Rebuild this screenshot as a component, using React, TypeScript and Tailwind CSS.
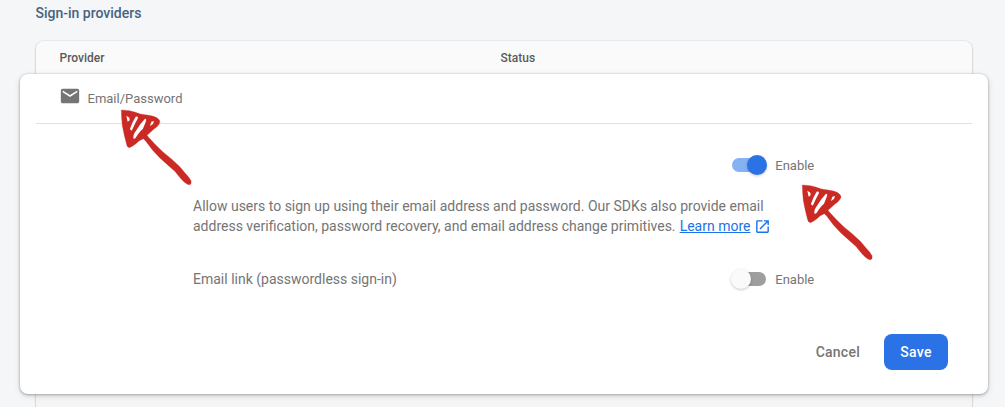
function Arrow({ className }: { className: string }) {
  return (
    <svg className={`pointer-events-none absolute size-[100px] ${className}`} viewBox="0 0 300 300" aria-hidden="true">
      <path
        fill="#ca2a23"
        stroke="#ca2a23"
        strokeWidth="1"
        d="M34 45L58 47Q73 50 91 57L124 62Q142 66 148 75Q152 82 147 88Q141 97 132 102L111 121L115 126Q137 151 158 170Q186 192 208 214Q216 223 225 234Q237 246 243 257Q245 268 239 269L232 268Q222 262 213 251Q203 240 196 230Q172 209 149 188Q126 166 107 138L100 131L88 137Q76 148 67 154L58 158Q51 156 50 149Q42 119 37 92Q34 65 34 45Z"
      />
      <path
        fill="white"
        d="M49 62L58 68L59 76L53 80Z
        M77 65Q84 64 84 69Q74 87 66 106Q61 107 60 101Q67 80 77 65Z
        M105 71Q111 71 107 81L99 101Q88 110 76 130L71 132Q67 121 78 107Q92 84 105 71Z
        M124 80L132 78L129 87L120 93Z"
      />
    </svg>
  );
}

function Toggle({ on = false }: { on?: boolean }) {
  return (
    <span
      role="switch"
      aria-checked={on}
      className={`mb-[2px] flex h-[14px] w-[34px] items-center rounded-full ${on ? "justify-end bg-[#85b2f2]" : "justify-start bg-[#9e9e9e]"}`}
    >
      <span
        className={`size-5 shrink-0 rounded-full shadow-[0_1px_3px_rgba(0,0,0,0.22)] ${on ? "-mr-px bg-[#2a72e6]" : "-ml-px bg-[#fafafa]"}`}
      />
    </span>
  );
}

export default function App() {
  return (
    <main className="relative h-[407px] w-[1005px] overflow-hidden bg-[#f5f6f8] font-['Roboto',sans-serif] text-[#757575]">
      <h2 className="h-[41px] pt-[3px] pl-[35.5px] text-[14px] leading-5 font-medium text-[#476282]">Sign-in providers</h2>
      <section className="mx-9 h-[400px] w-[936px] rounded-lg bg-[#f5f5f5] shadow-[0_1px_2px_rgba(0,0,0,0.28),0_0_2px_rgba(0,0,0,0.16)]">
        <header className="grid h-[33px] grid-cols-[441px_1fr] items-center rounded-t-lg bg-[#fafafa] pl-[23.5px] text-[12px] font-medium text-[#5b5b5b]">
          <span>Provider</span>
          <span>Status</span>
        </header>
        <div className="-mx-4 flex h-80 flex-col rounded-lg bg-white px-4 shadow-[0_1px_3px_rgba(0,0,0,0.22),0_0_2px_rgba(0,0,0,0.16),0_2px_6px_rgba(0,0,0,0.12)]">
          <div className="flex h-[50px] items-center gap-[6.5px] border-b border-[#e0e0e0] pl-[23px] text-[13px]">
            <svg className="-mt-[5px] size-[22px]" viewBox="0 0 24 24" fill="currentColor" aria-hidden="true">
              <path d="M20 4H4c-1.1 0-1.99.9-1.99 2L2 18c0 1.1.9 2 2 2h16c1.1 0 2-.9 2-2V6c0-1.1-.9-2-2-2zm0 4-8 5-8-5V6l8 5 8-5z" />
            </svg>
            <span>Email/Password</span>
          </div>
          <div className="ml-[157px] flex w-[640px] flex-col">
            <div className="mt-8 flex h-5 items-center gap-[9.25px] pl-[539px] text-[13px]">
              <Toggle on />
              <span>Enable</span>
            </div>
            <p className="mt-5 h-10 text-[14px] leading-5">
              Allow users to sign up using their email address and password. Our SDKs also provide email
              <br />
              address verification, password recovery, and email address change primitives.{" "}
              <a className="ml-[0.6px] text-[#1a73e8] underline">Learn more</a>
              <svg className="ml-[4px] inline-block size-[17px] align-[-4px] text-[#1a73e8]" viewBox="0 0 24 24" fill="currentColor" aria-hidden="true">
                <path d="M19 19H5V5h7V3H5c-1.11 0-2 .9-2 2v14c0 1.1.89 2 2 2h14c1.1 0 2-.9 2-2v-7h-2v7zM14 3v2h3.59l-9.83 9.83 1.41 1.41L19 6.41V10h2V3h-7z" />
              </svg>
            </p>
            <div className="mt-[33px] grid h-5 grid-cols-[539px_1fr] items-center">
              <span className="text-[14px]">Email link (passwordless sign-in)</span>
              <span className="flex items-center gap-[9.25px] text-[13px]">
                <Toggle />
                Enable
              </span>
            </div>
          </div>
          <div className="mt-auto mb-6 flex h-9 justify-end gap-2 pr-6 text-[14px] font-medium tracking-[0.25px]">
            <button className="px-4">Cancel</button>
            <button className="w-16 rounded-lg bg-[#2a72e6] text-white">Save</button>
          </div>
        </div>
      </section>
      <Arrow className="top-[95px] left-[110px]" />
      <Arrow className="top-[170px] left-[790.5px]" />
    </main>
  );
}
